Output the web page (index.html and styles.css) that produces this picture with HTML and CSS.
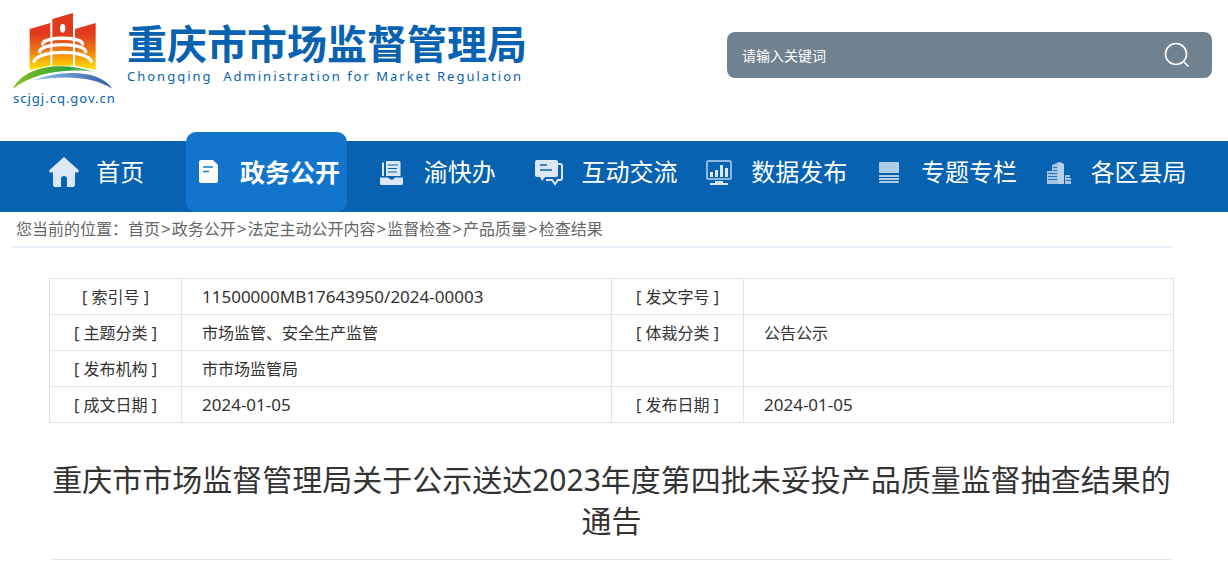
FILE: index.html
```html
<!DOCTYPE html>
<html lang="zh-CN">
<head>
    <meta charset="UTF-8">
    <meta name="viewport" content="width=device-width, initial-scale=1.0">
    <title>重庆市市场监督管理局</title>
    <link rel="stylesheet" href="styles.css">
</head>
<body>
    <header class="header">
        <a class="logo" href="#">
            <span class="emblem">
                <svg width="100" height="78" viewBox="38 33 300 234" aria-hidden="true">
                    <defs>
                        <linearGradient id="tower" gradientUnits="userSpaceOnUse" x1="0" y1="100" x2="0" y2="200">
                            <stop offset="0" stop-color="#e1391d"/>
                            <stop offset=".5" stop-color="#ee7d14"/>
                            <stop offset="1" stop-color="#ffd800"/>
                        </linearGradient>
                        <linearGradient id="green" x1="0" x2="1">
                            <stop offset="0" stop-color="#86bf1c"/>
                            <stop offset=".7" stop-color="#2fa33a"/>
                            <stop offset="1" stop-color="#8fcb9a"/>
                        </linearGradient>
                        <linearGradient id="blue" x1="0" x2="1">
                            <stop offset="0" stop-color="#8fc3e8"/>
                            <stop offset="1" stop-color="#2f5aa6"/>
                        </linearGradient>
                    </defs>
                    <path fill="url(#tower)" d="M88 84L150 66V194L88 207ZM156 54L218 36V194H156ZM224 84L286 66V207L224 194Z"/>
                    <ellipse cx="187" cy="82" rx="8" ry="13" fill="#fff"/>
                    <g fill="none" stroke="#fff" stroke-linecap="round" stroke-width="10">
                        <path d="M127 129C130 106 244 106 247 129"/>
                        <path d="M118 152C122 124 252 124 256 152"/>
                        <path d="M101 181C115 145 259 145 273 181"/>
                    </g>
                    <path fill="url(#green)" d="M38 263C70 200 170 178 280 212C190 200 95 218 38 263Z"/>
                    <path fill="url(#blue)" d="M100 238C180 205 300 205 336 263C280 228 200 222 100 238Z"/>
                </svg>
                <span class="domain">scjgj.cq.gov.cn</span>
            </span>
            <span class="name">
                <span class="name-cn">重庆市市场监督管理局</span>
                <span class="name-en">Chongqing&nbsp; Administration for Market Regulation</span>
            </span>
        </a>
        <form class="search">
            <input type="text" class="keyword" placeholder="请输入关键词" aria-label="请输入关键词">
            <button type="button" class="search-btn" aria-label="搜索">
                <svg width="26" height="26" viewBox="0 0 26 26" fill="none" stroke="#fff" stroke-width="1.6">
                    <circle cx="12" cy="12" r="10.5"/>
                    <path d="M19 19L24.500 24.500"/>
                </svg>
            </button>
        </form>
    </header>

    <nav class="nav">
        <a href="#">
            <svg class="icon" viewBox="0 0 30 30" fill="#dbe7f3"><path d="M15 0L29.500 13Q30.500 15.500 28 15.500H26V28Q26 30 24 30H18V22Q18 19 15 19Q12 19 12 22V30H6Q4 30 4 28V15.500H2Q-.5 15.500 .5 13Z"/></svg>
            首页
        </a>
        <a href="#" class="active">
            <svg class="icon" viewBox="0 0 30 30"><path fill="#fff" d="M8 3H20L25 8V24Q25 26 23 26H8Q6 26 6 24V5Q6 3 8 3Z"/><path stroke="#1275cb" stroke-width="1.500" d="M10 10H20M10 14.500H16"/></svg>
            政务公开
        </a>
        <a href="#">
            <svg class="icon" viewBox="0 0 30 30" fill="#dbe7f3"><path d="M5 5.500H7V19H5ZM9 4H22Q23.500 4 23.500 5.500V19H9ZM3 20.500H11Q15 25 18 20.500H26V26.500Q26 28 24.500 28H4.500Q3 28 3 26.500Z"/><path stroke="#0762b1" stroke-width="1.200" d="M11 8H21M11 11.500H20M11 15H20"/></svg>
            渝快办
        </a>
        <a href="#">
            <svg class="icon" viewBox="0 0 30 30" fill="#dbe7f3"><path d="M3 3H22Q24 3 24 5V18Q24 20 22 20H11L8 24L6 20H3Q1 20 1 18V5Q1 3 3 3Z"/><path fill="none" stroke="#dbe7f3" stroke-width="2" d="M24 7H26Q28 7 28 9V21Q28 23 26 23H24L21 27L18 23H12"/><path stroke="#0762b1" stroke-width="1.500" d="M6 8H13M6 13H18"/></svg>
            互动交流
        </a>
        <a href="#">
            <svg class="icon" viewBox="0 0 30 30" fill="#dbe7f3"><rect x="3" y="4" width="24" height="18" rx="1" fill="none" stroke="#b9d2ea" stroke-width="1.500"/><path d="M6 15H9V20H6ZM11 13H14V20H11ZM16 8H19V20H16ZM21 11H24V20H21ZM11 24H19V26H24V28H6V26H11Z"/></svg>
            数据发布
        </a>
        <a href="#">
            <svg class="icon" viewBox="0 0 30 30" fill="#b0cce6"><rect x="5" y="5" width="20" height="11" rx="1"/><rect x="5" y="18" width="20" height="2"/><rect x="5" y="21" width="20" height="2"/><rect x="5" y="24" width="20" height="2" rx="1"/></svg>
            专题专栏
        </a>
        <a href="#">
            <svg class="icon" viewBox="0 0 30 30" fill="#a3c4e3"><path d="M8 8L15 5V27H3V14H8ZM21 18H26V21H27V27H21Z"/><path fill="#b7d1e9" d="M14 6L16 5L20 7V27H14Z"/><path stroke="#0762b1" stroke-width=".8" d="M9 10.500H13M9 13.500H13M4 16.500H13M4 19.500H13M4 22.500H13M22 20.500H26M22 23.500H27"/></svg>
            各区县局
        </a>
    </nav>

    <div class="crumbs">您当前的位置：<a href="#">首页</a><i>&gt;</i><a href="#">政务公开</a><i>&gt;</i><a href="#">法定主动公开内容</a><i>&gt;</i><a href="#">监督检查</a><i>&gt;</i><a href="#">产品质量</a><i>&gt;</i><a href="#">检查结果</a></div>

    <main class="content">
        <table class="info">
            <tr>
                <th scope="row">[ 索引号 ]</th>
                <td class="num">11500000MB17643950/2024-00003</td>
                <th scope="row">[ 发文字号 ]</th>
                <td></td>
            </tr>
            <tr>
                <th scope="row">[ 主题分类 ]</th>
                <td>市场监管、安全生产监管</td>
                <th scope="row">[ 体裁分类 ]</th>
                <td>公告公示</td>
            </tr>
            <tr>
                <th scope="row">[ 发布机构 ]</th>
                <td>市市场监管局</td>
                <td></td>
                <td></td>
            </tr>
            <tr>
                <th scope="row">[ 成文日期 ]</th>
                <td class="num">2024-01-05</td>
                <th scope="row">[ 发布日期 ]</th>
                <td class="num">2024-01-05</td>
            </tr>
        </table>
        <h1 class="title">重庆市市场监督管理局关于公示送达2023年度第四批未妥投产品质量监督抽查结果的通告</h1>
    </main>
</body>
</html>
```

FILE: styles.css
```css
*
{
    box-sizing: border-box;
}
body
{
    margin: 0;
    background-color: #ffffff;
    color: #333333;
    font-family: "Noto Sans", "Noto Sans CJK SC", sans-serif;
    font-size: 16px;
}
a
{
    color: inherit;
    text-decoration: none;
}

/* header */
.header
{
    display: flex;
    justify-content: space-between;
    align-items: flex-start;
    padding: 12px 16px 0 13px;
    min-height: 141px;
}
.logo
{
    display: flex;
    gap: 14px;
    color: #0762b1;
}
.emblem
{
    display: flex;
    flex-direction: column;
    width: 100px;
}
.domain
{
    font-size: 13px;
    line-height: 16px;
    letter-spacing: 1px;
}
.name
{
    display: flex;
    flex-direction: column;
    padding-top: 8px;
}
.name-cn
{
    font-size: 40px;
    line-height: 48px;
    font-weight: bold;
}
.name-en
{
    font-size: 13px;
    line-height: 16px;
    letter-spacing: 2px;
}
.search
{
    display: flex;
    align-items: center;
    width: 42%;
    max-width: 485px;
    height: 46px;
    margin-top: 20px;
    padding: 0 22px 0 15px;
    border-radius: 8px;
    background-color: #708290;
}
.keyword
{
    flex: 1;
    min-width: 0;
    padding: 0;
    border: 0;
    outline: 0;
    background: none;
    color: #ffffff;
    font-family: inherit;
    font-size: 14px;
}
.keyword::placeholder
{
    color: #ffffff;
}
.search-btn
{
    display: flex;
    padding: 0;
    border: 0;
    background: none;
    cursor: pointer;
}

/* main menu */
.nav
{
    display: grid;
    grid-template-columns: repeat(7, 1fr);
    height: 71px;
    padding: 0 28px 0 12px;
    background-color: #0762b1;
    color: #ffffff;
}
.nav a
{
    display: flex;
    justify-content: center;
    align-items: center;
    gap: 17px;
    padding-bottom: 5px;
    font-size: 24px;
    line-height: 60px;
    white-space: nowrap;
}
.nav a,
.nav .active
{
    padding-bottom: 10px;
}
.nav .active
{
    margin: -9px 4px 0;
    padding-top: 9px;
    border-radius: 10px;
    background-color: #1275cb;
    font-size: 25px;
    font-weight: bold;
}
.icon
{
    flex: none;
    width: 30px;
    height: 30px;
}

/* breadcrumb */
.crumbs
{
    margin: 0 56px 0 12px;
    padding: 0 4px;
    border-bottom: 2px solid #e6eef6;
    color: #666666;
    line-height: 34px;
}
.crumbs i
{
    padding: 0 1px;
    font-size: 17px;
    line-height: 16px;
    font-style: normal;
}

/* article */
.content
{
    margin: 30px 54px 0 49px;
}
.info
{
    width: 100%;
    border-collapse: collapse;
    table-layout: fixed;
}
.info th,
.info td
{
    height: 36px;
    padding: 0 20px;
    border: 1px solid #e2e2e2;
    text-align: left;
    font-weight: normal;
    line-height: 24px;
}
.info th
{
    width: 132px;
    padding: 0;
    text-align: center;
}
.info .num
{
    font-size: 17px;
}
.title
{
    margin: 36px 2px 0;
    padding-bottom: 18px;
    border-bottom: 1px solid #e2e2e2;
    font-size: 30px;
    line-height: 41px;
    font-weight: normal;
    text-align: center;
}
```
